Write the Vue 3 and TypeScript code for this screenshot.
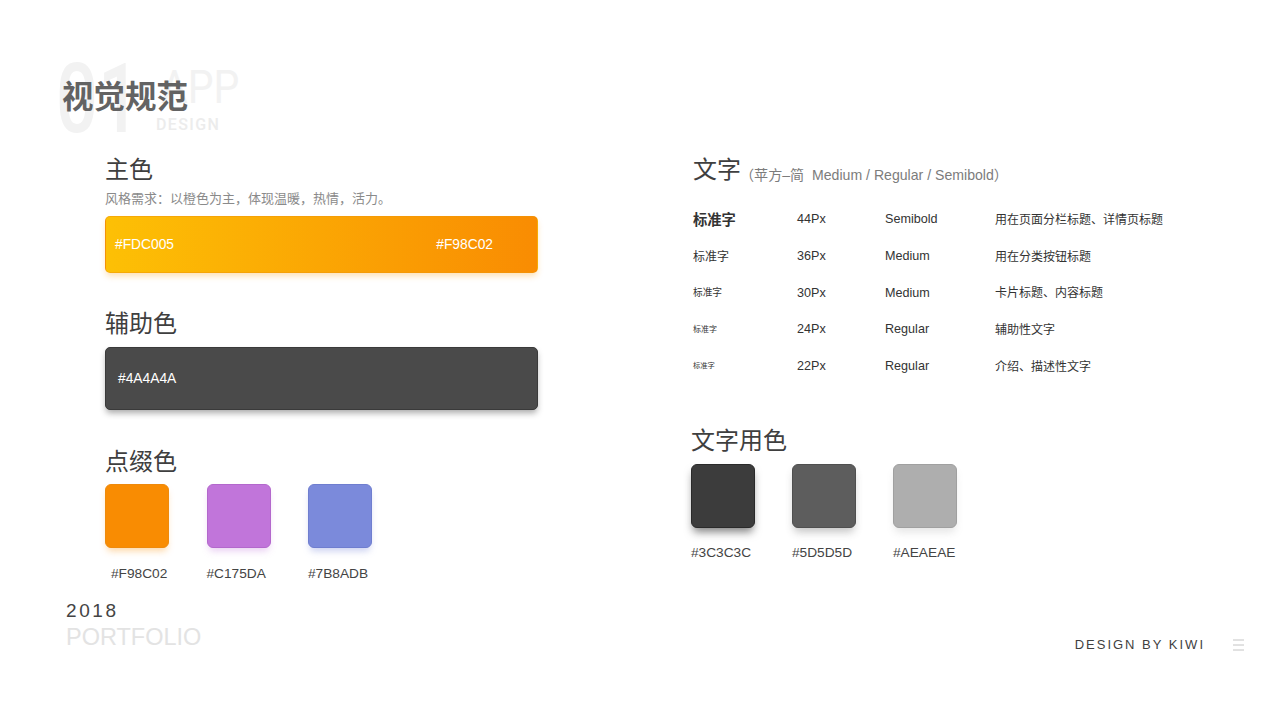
<script setup lang="ts">
interface Swatch { hex: string; shadow: string; border: string }
const accents: Swatch[] = [
  { hex: '#F98C02', shadow: 'rgba(249,140,2,.35)', border: '#ee8a0c' },
  { hex: '#C175DA', shadow: 'rgba(193,117,218,.35)', border: '#b368cc' },
  { hex: '#7B8ADB', shadow: 'rgba(123,138,219,.4)', border: '#6f7ecf' },
]
const textColors: Swatch[] = [
  { hex: '#3C3C3C', shadow: 'rgba(30,30,30,.55)', border: '#2a2a2a' },
  { hex: '#5D5D5D', shadow: 'rgba(60,60,60,.3)', border: '#4f4f4f' },
  { hex: '#AEAEAE', shadow: 'rgba(120,120,120,.2)', border: '#a0a0a0' },
]
const rows = [
  { cls: 's44', size: '44Px', weight: 'Semibold', use: '用在页面分栏标题、详情页标题' },
  { cls: 's36', size: '36Px', weight: 'Medium', use: '用在分类按钮标题' },
  { cls: 's30', size: '30Px', weight: 'Medium', use: '卡片标题、内容标题' },
  { cls: 's24', size: '24Px', weight: 'Regular', use: '辅助性文字' },
  { cls: 's22', size: '22Px', weight: 'Regular', use: '介绍、描述性文字' },
]
</script>

<template>
  <div class="page">
    <header class="head">
      <div class="ghost">
        <span class="num">01</span>
        <div class="ghost-words">
          <span class="app">APP</span>
          <span class="design">DESIGN</span>
        </div>
      </div>
      <h1 class="title">视觉规范</h1>
    </header>

    <main class="main">
      <section class="left">
        <h2 class="h">主色</h2>
        <p class="desc">风格需求：以橙色为主，体现温暖，热情，活力。</p>
        <div class="bar primary">
          <span>#FDC005</span>
          <span>#F98C02</span>
        </div>
        <h2 class="h second">辅助色</h2>
        <div class="bar dark"><span>#4A4A4A</span></div>
        <h2 class="h third">点缀色</h2>
        <div class="swatches accent">
          <div v-for="s in accents" :key="s.hex" class="swatch">
            <div class="chip" :style="{ background: s.hex, borderColor: s.border, boxShadow: `0 5px 7px -2px ${s.shadow}` }"></div>
            <span class="hex">{{ s.hex }}</span>
          </div>
        </div>
      </section>

      <section class="right">
        <div class="font-head">
          <h2 class="h">文字</h2>
          <span class="font-note">（苹方–简&nbsp; Medium / Regular / Semibold）</span>
        </div>
        <div class="table">
          <div v-for="r in rows" :key="r.size" class="row">
            <span :class="['sample', r.cls]">标准字</span>
            <span class="latin">{{ r.size }}</span>
            <span class="latin">{{ r.weight }}</span>
            <span class="use">{{ r.use }}</span>
          </div>
        </div>
        <h2 class="h colors-title">文字用色</h2>
        <div class="swatches">
          <div v-for="s in textColors" :key="s.hex" class="swatch">
            <div class="chip" :style="{ background: s.hex, borderColor: s.border, boxShadow: `0 6px 8px -2px ${s.shadow}` }"></div>
            <span class="hex">{{ s.hex }}</span>
          </div>
        </div>
      </section>
    </main>

    <footer class="foot">
      <div class="year">
        <span class="y">2018</span>
        <span class="pf">PORTFOLIO</span>
      </div>
      <div class="credit">
        <span>DESIGN BY KIWI</span>
        <svg class="menu" width="12" height="12" viewBox="0 0 12 12" aria-hidden="true">
          <path d="M0 1h11M0 6h11M0 11h11" stroke="#c4c4c4" stroke-width="1" fill="none" />
        </svg>
      </div>
    </footer>
  </div>
</template>

<style>
html, body { margin: 0; background: #fff; }
</style>

<style scoped>
.page {
  width: 1280px;
  height: 720px;
  overflow: hidden;
  background: #fff;
  display: flex;
  flex-direction: column;
  font-family: "Liberation Sans", "Noto Sans CJK SC", sans-serif;
  box-sizing: border-box;
}
h1, h2, p { margin: 0; font-weight: 400; }

.head { position: relative; height: 152px; flex: none; }
.ghost {
  position: absolute;
  left: 56px;
  top: 53px;
  display: flex;
  color: #f2f2f2;
  font-family: "Roboto", sans-serif;
}
.num {
  width: 98px;
  font-size: 97px;
  line-height: 92px;
  font-weight: 500;
  transform: scaleX(.76);
  transform-origin: left center;
}
.ghost-words { display: flex; flex-direction: column; align-items: flex-start; }
.app {
  font-size: 47px;
  line-height: 46px;
  margin-top: 11px;
  margin-left: 7px;
  transform: scaleX(.87);
  transform-origin: left center;
}
.design { font-size: 16px; line-height: 18px; margin-top: 6px; letter-spacing: 1.4px; color: #ececec; font-weight: 500; margin-left: 2px; }
.title {
  position: absolute;
  left: 62px;
  top: 76px;
  font-size: 31.5px;
  line-height: 42px;
  font-weight: 700;
  color: #636363;
}

.main { flex: none; height: 440px; display: flex; }
.left { width: 433px; margin-left: 105px; }
.right { margin-left: 153px; flex: 1; }

.h { font-size: 24px; line-height: 36px; color: #3f3f3f; }
.desc { font-size: 13px; line-height: 18px; color: #8a8a8a; margin-top: 2px; margin-bottom: 8px; }

.bar {
  width: 433px;
  box-sizing: border-box;
  border-radius: 5px;
  display: flex;
  align-items: center;
  color: #fff;
  font-size: 13.8px;
}
.primary {
  height: 57px;
  padding: 0 44px 0 9px;
  justify-content: space-between;
  background: linear-gradient(90deg, #fdc005, #f98c02);
  box-shadow: 0 4px 6px -1px rgba(249, 160, 20, .32);
  border: 1px solid rgba(240, 150, 10, .5);
}
.dark {
  height: 63px;
  padding: 0 12px;
  background: #4a4a4a;
  border: 1px solid #3a3a3a;
  box-shadow: 0 4px 6px -1px rgba(40, 40, 40, .4);
}
.second { margin-top: 33px; margin-bottom: 5px; }
.third { margin-top: 34px; margin-bottom: 4px; }

.swatches { display: flex; gap: 37px; }
.accent { gap: 37.5px; }
.accent .swatch:first-child .hex { margin-left: 6px; }
.accent .hex { margin-top: 17px; }
.swatch { width: 64px; display: flex; flex-direction: column; }
.chip {
  width: 64px;
  height: 64px;
  box-sizing: border-box;
  border-radius: 6px;
  border: 1px solid;
}
.hex { font-size: 13.7px; line-height: 18px; color: #444; margin-top: 16px; white-space: nowrap; }

.right .h { margin-left: 2px; }
.font-head { display: flex; align-items: flex-end; }
.font-note { font-size: 14.1px; line-height: 18px; color: #7c7c7c; margin-left: -1px; margin-bottom: 4px; white-space: nowrap; }

.table { margin-top: 12px; margin-left: 2px; }
.row {
  display: grid;
  grid-template-columns: 104px 88px 110px 1fr;
  height: 36.7px;
  align-items: center;
  font-size: 12.6px;
  color: #333;
}
.latin { padding-top: 2px; }
.use { font-size: 12px; }
.sample { color: #333; }
.s44 { font-size: 14.3px; font-weight: 700; color: #333; }
.s36 { font-size: 12px; }
.s30 { font-size: 9.7px; }
.s24 { font-size: 8px; }
.s22 { font-size: 7.3px; }

.right .colors-title { margin-top: 40px; margin-bottom: 5px; margin-left: 0; }

.foot {
  flex: none;
  display: flex;
  justify-content: space-between;
  align-items: flex-end;
  padding: 0 35px 0 66px;
  margin-top: 8px;
}
.year { display: flex; flex-direction: column; padding-bottom: 2px; }
.y { font-size: 19px; line-height: 22px; color: #444; letter-spacing: 2.6px; }
.pf { font-size: 23.5px; line-height: 28px; color: #e3e3e3; margin-top: 1px; }
.credit {
  display: flex;
  align-items: center;
  gap: 28px;
  font-size: 13px;
  line-height: 16px;
  letter-spacing: 2px;
  color: #3f3f3f;
}
</style>
